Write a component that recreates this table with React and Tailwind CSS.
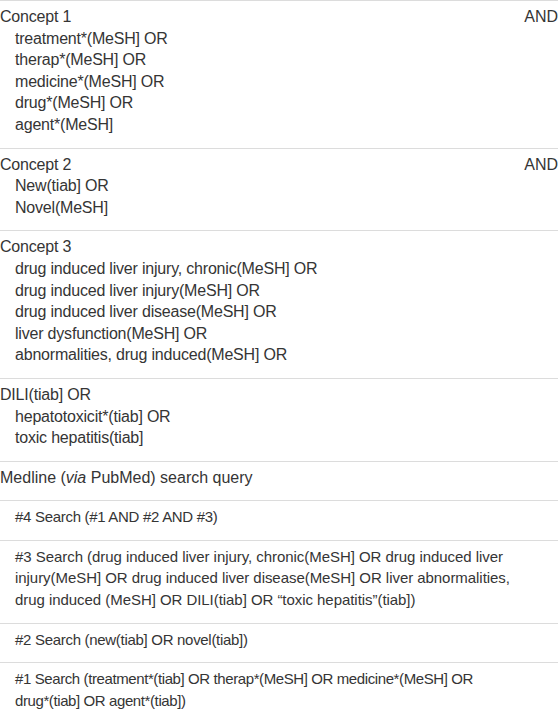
import React from 'react';

const concepts = [
  {
    title: 'Concept 1',
    op: 'AND',
    terms: ['treatment*(MeSH] OR', 'therap*(MeSH] OR', 'medicine*(MeSH] OR', 'drug*(MeSH] OR', 'agent*(MeSH]'],
  },
  {
    title: 'Concept 2',
    op: 'AND',
    terms: ['New(tiab] OR', 'Novel(MeSH]'],
  },
  {
    title: 'Concept 3',
    terms: [
      'drug induced liver injury, chronic(MeSH] OR',
      'drug induced liver injury(MeSH] OR',
      'drug induced liver disease(MeSH] OR',
      'liver dysfunction(MeSH] OR',
      'abnormalities, drug induced(MeSH] OR',
    ],
  },
  {
    title: 'DILI(tiab] OR',
    terms: ['hepatotoxicit*(tiab] OR', 'toxic hepatitis(tiab]'],
  },
];

const Row = ({ children, last }) => (
  <div className={`border-t border-[#dcdcdc] pt-[5px] pb-[12px] ${last ? 'border-b' : ''}`}>
    {children}
  </div>
);

const App = () => {
  return (
    <div
      className="w-[558px] bg-white text-[16px] leading-[21.6px] text-[#353535]"
      style={{ fontFamily: '"Liberation Sans", Arial, sans-serif' }}
    >
      {concepts.map((c) => (
        <Row key={c.title}>
          <div className="flex justify-between">
            <div className="tracking-[-0.2px]">
              <div>{c.title}</div>
              {c.terms.map((t) => (
                <div key={t} className="pl-[15px]">{t}</div>
              ))}
            </div>
            {c.op && <div>{c.op}</div>}
          </div>
        </Row>
      ))}

      <Row>
        Medline (<i>via</i> PubMed) search query
      </Row>
      <div className="text-[15px] tracking-[-0.3px]">
        <Row>
          <div className="pl-[15px]">#4 Search (#1 AND #2 AND #3)</div>
        </Row>
        <Row>
          <div className="pl-[15px] tracking-[-0.05px]">
            #3 Search (drug induced liver injury, chronic(MeSH] OR drug induced liver
            <br />
            injury(MeSH] OR drug induced liver disease(MeSH] OR liver abnormalities,
            <br />
            drug induced (MeSH] OR DILI(tiab] OR “toxic hepatitis”(tiab])
          </div>
        </Row>
        <Row>
          <div className="pl-[15px]">#2 Search (new(tiab] OR novel(tiab])</div>
        </Row>
        <Row last>
          <div className="pl-[15px] tracking-[-0.4px]">
            #1 Search (treatment*(tiab] OR therap*(MeSH] OR medicine*(MeSH] OR
            <br />
            drug*(tiab] OR agent*(tiab])
          </div>
        </Row>
      </div>
    </div>
  );
};

export default App;
